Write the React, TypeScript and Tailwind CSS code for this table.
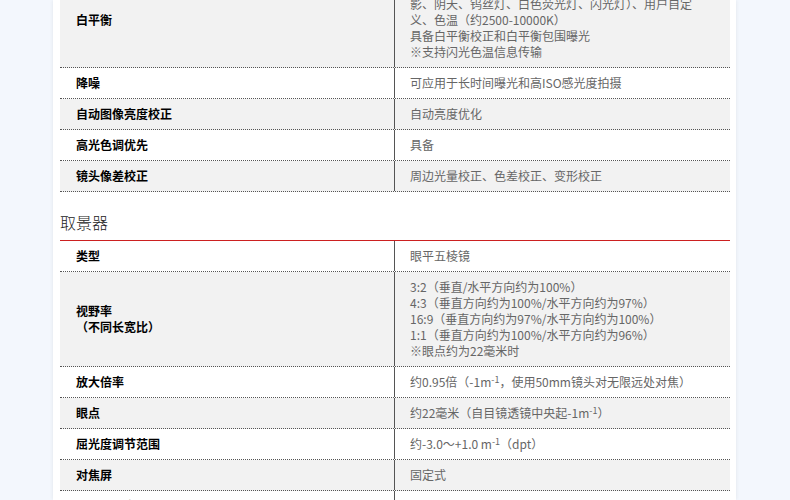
import React from 'react';

type Row = { label: React.ReactNode; value: React.ReactNode };

const Sup: React.FC<{ children: React.ReactNode }> = ({ children }) => (
  <sup className="text-[9px]">{children}</sup>
);

const imageRows: Row[] = [
  {
    label: '白平衡',
    value: (
      <>
        自动、预设（日光、阴<br />
        影、阴天、钨丝灯、白色荧光灯、闪光灯）、用户自定<br />
        义、色温（约2500-10000K）<br />
        具备白平衡校正和白平衡包围曝光<br />
        ※支持闪光色温信息传输
      </>
    ),
  },
  { label: '降噪', value: '可应用于长时间曝光和高ISO感光度拍摄' },
  { label: '自动图像亮度校正', value: '自动亮度优化' },
  { label: '高光色调优先', value: '具备' },
  { label: '镜头像差校正', value: '周边光量校正、色差校正、变形校正' },
];

const finderRows: Row[] = [
  { label: '类型', value: '眼平五棱镜' },
  {
    label: (
      <>
        视野率<br />
        （不同长宽比）
      </>
    ),
    value: (
      <>
        3:2（垂直/水平方向约为100%）<br />
        4:3（垂直方向约为100%/水平方向约为97%）<br />
        16:9（垂直方向约为97%/水平方向约为100%）<br />
        1:1（垂直方向约为100%/水平方向约为96%）<br />
        ※眼点约为22毫米时
      </>
    ),
  },
  {
    label: '放大倍率',
    value: (
      <>
        约0.95倍（-1m<Sup>-1</Sup>，使用50mm镜头对无限远处对焦）
      </>
    ),
  },
  {
    label: '眼点',
    value: (
      <>
        约22毫米（自目镜透镜中央起-1m<Sup>-1</Sup>）
      </>
    ),
  },
  {
    label: '屈光度调节范围',
    value: (
      <>
        约-3.0～+1.0 m<Sup>-1</Sup>（dpt）
      </>
    ),
  },
  { label: '对焦屏', value: '固定式' },
  { label: '取景器信息', value: '网格线显示' },
];

const SpecTable: React.FC<{ rows: Row[]; startGray: boolean }> = ({ rows, startGray }) => (
  <div className="flex flex-col">
    {rows.map((row, i) => {
      const gray = startGray ? i % 2 === 0 : i % 2 === 1;
      return (
        <div
          key={i}
          className={`flex border-b border-dotted border-[#555] text-[12px] leading-[16px] ${gray ? 'bg-[#f2f2f2]' : 'bg-white'}`}
        >
          <div className="w-[334px] shrink-0 flex items-center pl-[16px] py-[7px] min-h-[30px] font-bold text-black">
            <div>{row.label}</div>
          </div>
          <div className="flex-1 border-l border-[#555] flex items-center pl-[15px] pr-[16px] py-[7px] min-h-[30px] text-[#666]">
            <div>{row.value}</div>
          </div>
        </div>
      );
    })}
  </div>
);

export default function App() {
  return (
    <div
      className="w-full h-[500px] overflow-hidden bg-[#f3f7fd] flex"
      style={{ fontFamily: '"Noto Sans CJK SC", "Liberation Sans", sans-serif' }}
    >
      <div className="ml-[53px] w-[683px] h-full bg-white shadow-[0_0_4px_rgba(0,0,0,0.08)] px-[7px] pr-[6px]">
        <div className="-mt-[27px]">
          <SpecTable rows={imageRows} startGray={true} />
          <div className="h-[49px] flex items-end pb-[7px] border-b border-[#cc2020]">
            <span className="text-[16px] leading-[22px] font-light text-[#222]">取景器</span>
          </div>
          <SpecTable rows={finderRows} startGray={false} />
        </div>
      </div>
    </div>
  );
}
